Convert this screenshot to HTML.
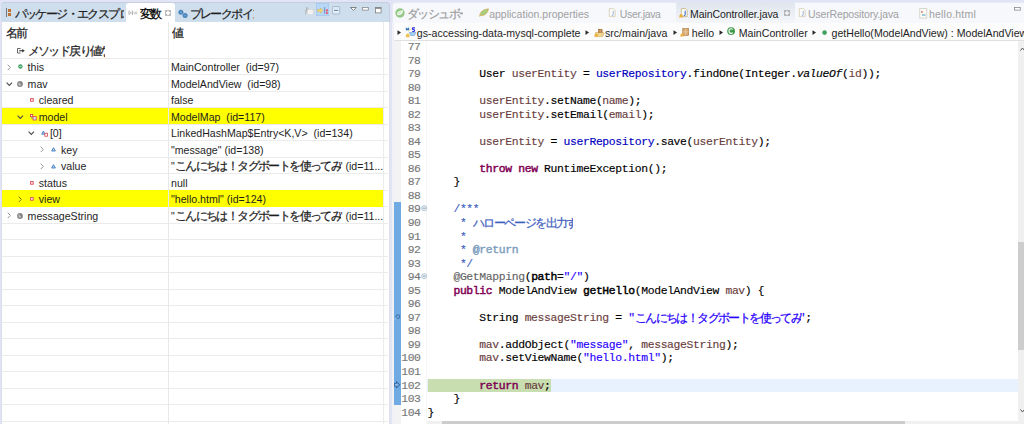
<!DOCTYPE html><html><head><meta charset="utf-8"><style>
html,body{margin:0;padding:0}
body{width:1024px;height:424px;overflow:hidden;background:#e0e4f4;position:relative;font-family:"Liberation Sans",sans-serif}
.a{position:absolute}
.t{white-space:nowrap}
.code{font-family:"Liberation Mono",monospace;font-size:11.4px;letter-spacing:-0.36px;line-height:13.54px;white-space:pre;color:#000;-webkit-text-stroke:0.15px}
.kw{color:#7f0055;-webkit-text-stroke:0.45px #7f0055}
.lv{color:#6a3e3e}
.fd{color:#0000c0}
.st{color:#2a00ff}
.jd{color:#3f5fbf}
.jt{color:#7f9fbf;-webkit-text-stroke:0.45px #7f9fbf}
.an{color:#646464}
.b{-webkit-text-stroke:0.45px #000}
.i{font-style:italic}
.jp{position:relative;top:0px;font-size:12px;letter-spacing:-1.6px;-webkit-text-stroke:0.25px;font-family:"Liberation Sans",sans-serif;display:inline-block;white-space:nowrap;overflow:hidden;padding-right:2px;margin-right:-2px;vertical-align:top;text-align:justify;text-align-last:justify}
</style></head><body>
<div class="a" style="left:0.70px;top:2.10px;width:389.30px;height:20.30px;background:#c8cedf;border-radius:3.5px 3.5px 0 0"></div>
<div class="a" style="left:1.40px;top:2.80px;width:387.80px;height:19.60px;background:#cfdeed;border-radius:3px 3px 0 0"></div>
<div class="a" style="left:126.00px;top:3.00px;width:49.20px;height:19.40px;background:#ffffff;border-radius:3px 3px 0 0"></div>
<div class="a" style="left:1.20px;top:22.40px;width:387.60px;height:401.60px;background:#ffffff;"></div>
<div class="a" style="left:388.80px;top:22.40px;width:1.20px;height:401.60px;background:#dfe0e8;"></div>
<div class="a" style="left:0.70px;top:22.40px;width:0.70px;height:401.60px;background:#dcdde8;"></div>
<svg class="a" style="left:6.00px;top:8.00px;" width="6" height="10" viewBox="0 0 6 10"><rect x="0" y="0" width="1" height="9" fill="#777"/><rect x="2" y="1" width="3" height="3" fill="#c07030"/><rect x="2" y="5" width="3" height="3" fill="#c07030"/></svg>
<div class="a t" style="left:14.50px;top:6.79px;font-size:11px;line-height:14px;color:#1e1e1e;"><span class="jp" style="width:107px">パッケージ・エクスプローラー</span></div>
<svg class="a" style="left:127.50px;top:9.50px;" width="10" height="6" viewBox="0 0 10 6"><path d="M1.3 0.5Q0.3 2.75 1.3 5 M4.3 0.5Q5.3 2.75 4.3 5" stroke="#888" stroke-width="0.7" fill="none"/><path d="M2 1.8L3.6 3.8M3.6 1.8L2 3.8" stroke="#999" stroke-width="0.6"/><path d="M6.2 2.2h3 M6.2 3.6h3" stroke="#999" stroke-width="0.6"/></svg>
<div class="a t" style="left:139.50px;top:6.79px;font-size:11px;line-height:14px;color:#000;"><span class="jp" style="width:21px">変数</span></div>
<svg class="a" style="left:165.00px;top:10.00px;" width="6" height="6" viewBox="0 0 6 6"><path d="M0.6 0.6h4.8v4.8h-4.8z M0.6 0.6l4.8 4.8 M5.4 0.6l-4.8 4.8" stroke="#8a8a8a" stroke-width="0.6" fill="none"/><rect x="2" y="2" width="2" height="2" fill="#fff"/></svg>
<svg class="a" style="left:177.50px;top:8.50px;" width="10" height="9" viewBox="0 0 10 9"><circle cx="2.9" cy="3.3" r="2.3" fill="#4a88c0" stroke="#3a70a8" stroke-width="0.4"/><circle cx="7.1" cy="6.6" r="2.3" fill="#4a88c0" stroke="#3a70a8" stroke-width="0.4"/><circle cx="2.9" cy="3.3" r="0.7" fill="#8cbce6"/><circle cx="7.1" cy="6.6" r="0.7" fill="#8cbce6"/></svg>
<div class="a t" style="left:189.50px;top:6.79px;font-size:11px;line-height:14px;color:#1e1e1e;"><span class="jp" style="width:62px">ブレークポイント</span></div>
<svg class="a" style="left:303.80px;top:5.60px;" width="10" height="9" viewBox="0 0 10 9"><path d="M1.5 8.5L2.8 1.2 M2.8 1.2L4.5 3.5 M1 5L3.5 4" stroke="#a8a8a8" stroke-width="0.8" fill="none"/><rect x="3.6" y="3.6" width="5.6" height="5" fill="#f2f2f2" stroke="#d4d4d4" stroke-width="0.6"/></svg>
<div class="a" style="left:315.90px;top:3.20px;width:13.60px;height:12.60px;background:#b8d7f6;box-shadow:inset 0 0 0 0.8px #a4caf0"></div>
<svg class="a" style="left:317.30px;top:6.50px;" width="12" height="8" viewBox="0 0 12 8"><path d="M0.5 2.6H3.6V1.2L6 3.5L3.6 5.8V4.4H0.5z" fill="#f4e088" stroke="#d8b040" stroke-width="0.6"/><path d="M7.6 0.6V6.4" stroke="#4a6ab0" stroke-width="1.1" stroke-dasharray="1 0.6"/><circle cx="9.9" cy="3.4" r="1.1" fill="#e85068"/><circle cx="9.9" cy="6" r="1.1" fill="#e85068"/></svg>
<svg class="a" style="left:332.20px;top:6.20px;" width="9" height="9" viewBox="0 0 9 9"><rect x="0.5" y="0.5" width="7.2" height="7.6" rx="0.8" fill="#dbe8f6" stroke="#9aaabb" stroke-width="0.7"/><rect x="1.5" y="3" width="5.4" height="2.6" fill="#fff"/><path d="M2 4.3h4.4" stroke="#3f6aa8" stroke-width="1"/></svg>
<svg class="a" style="left:349.80px;top:6.60px;" width="7" height="4" viewBox="0 0 7 4"><path d="M0.5 0.5H6.3L3.4 3.4z" fill="#fff" stroke="#666" stroke-width="0.8"/></svg>
<svg class="a" style="left:361.60px;top:6.80px;" width="7" height="4" viewBox="0 0 7 4"><rect x="0.5" y="0.5" width="5.8" height="2.6" fill="#fff" stroke="#8a8a8a" stroke-width="0.8"/></svg>
<svg class="a" style="left:374.80px;top:6.80px;" width="7" height="7" viewBox="0 0 7 7"><rect x="0.5" y="0.5" width="5.6" height="5.4" fill="#fff" stroke="#808080" stroke-width="0.8"/><rect x="0.5" y="0.5" width="5.6" height="1.3" fill="#808080"/></svg>
<div class="a t" style="left:6.00px;top:26.39px;font-size:11px;line-height:14px;color:#1e1e1e;"><span class="jp" style="width:20.5px">名前</span></div>
<div class="a t" style="left:172.00px;top:26.39px;font-size:11px;line-height:14px;color:#1e1e1e;"><span class="jp" style="width:10px">値</span></div>
<div class="a" style="left:2.40px;top:57.50px;width:385.40px;height:1.00px;background:#ebebeb;"></div>
<div class="a" style="left:2.40px;top:74.02px;width:385.40px;height:1.00px;background:#ebebeb;"></div>
<div class="a" style="left:2.40px;top:90.54px;width:385.40px;height:1.00px;background:#ebebeb;"></div>
<div class="a" style="left:2.40px;top:107.06px;width:385.40px;height:1.00px;background:#ebebeb;"></div>
<div class="a" style="left:2.40px;top:123.58px;width:385.40px;height:1.00px;background:#ebebeb;"></div>
<div class="a" style="left:2.40px;top:140.10px;width:385.40px;height:1.00px;background:#ebebeb;"></div>
<div class="a" style="left:2.40px;top:156.62px;width:385.40px;height:1.00px;background:#ebebeb;"></div>
<div class="a" style="left:2.40px;top:173.14px;width:385.40px;height:1.00px;background:#ebebeb;"></div>
<div class="a" style="left:2.40px;top:189.66px;width:385.40px;height:1.00px;background:#ebebeb;"></div>
<div class="a" style="left:2.40px;top:206.18px;width:385.40px;height:1.00px;background:#ebebeb;"></div>
<div class="a" style="left:2.40px;top:222.70px;width:385.40px;height:1.00px;background:#ebebeb;"></div>
<div class="a" style="left:2.40px;top:239.22px;width:385.40px;height:1.00px;background:#ebebeb;"></div>
<div class="a" style="left:2.40px;top:255.74px;width:385.40px;height:1.00px;background:#ebebeb;"></div>
<div class="a" style="left:2.40px;top:272.26px;width:385.40px;height:1.00px;background:#ebebeb;"></div>
<div class="a" style="left:2.40px;top:288.78px;width:385.40px;height:1.00px;background:#ebebeb;"></div>
<div class="a" style="left:2.40px;top:305.30px;width:385.40px;height:1.00px;background:#ebebeb;"></div>
<div class="a" style="left:2.40px;top:321.82px;width:385.40px;height:1.00px;background:#ebebeb;"></div>
<div class="a" style="left:2.40px;top:338.34px;width:385.40px;height:1.00px;background:#ebebeb;"></div>
<div class="a" style="left:2.40px;top:354.86px;width:385.40px;height:1.00px;background:#ebebeb;"></div>
<div class="a" style="left:2.40px;top:371.38px;width:385.40px;height:1.00px;background:#ebebeb;"></div>
<div class="a" style="left:2.40px;top:387.90px;width:385.40px;height:1.00px;background:#ebebeb;"></div>
<div class="a" style="left:2.40px;top:404.42px;width:385.40px;height:1.00px;background:#ebebeb;"></div>
<div class="a" style="left:2.40px;top:420.94px;width:385.40px;height:1.00px;background:#ebebeb;"></div>
<div class="a" style="left:2.40px;top:107.68px;width:380.60px;height:16.50px;background:#ffff00;"></div>
<div class="a" style="left:2.40px;top:190.28px;width:380.60px;height:16.50px;background:#ffff00;"></div>
<div class="a" style="left:167.80px;top:22.40px;width:1.00px;height:401.60px;background:#e8e8e8;"></div>
<div class="a" style="left:383.00px;top:22.40px;width:0.80px;height:401.60px;background:#ececec;"></div>
<svg class="a" style="left:16.50px;top:47.70px;" width="8" height="6" viewBox="0 0 8 6"><path d="M3.6 0.5H0.5V5H3.6" stroke="#555" stroke-width="0.9" fill="none"/><path d="M2.2 2.75h3.6" stroke="#333" stroke-width="1.1"/><path d="M5.2 0.9L7.8 2.75L5.2 4.6z" fill="#333"/></svg>
<div class="a t" style="left:27.60px;top:43.71px;font-size:10.6px;line-height:14px;color:#1e1e1e;"><span class="jp" style="width:75.5px">メソッド戻り値なし</span></div>
<svg class="a" style="left:6.70px;top:63.62px;" width="5" height="7" viewBox="0 0 5 7"><path d="M0.7 0.7L3.4 3.4L0.7 6.1" stroke="#959595" stroke-width="1" fill="none"/></svg>
<svg class="a" style="left:17.60px;top:64.42px;" width="5" height="5" viewBox="0 0 5 5"><circle cx="2.4" cy="2.45" r="2.2" fill="#41a064"/><path d="M1.2 2.45h2.4" stroke="#b8e6c8" stroke-width="0.9"/></svg>
<div class="a t" style="left:27.60px;top:60.23px;font-size:10.6px;line-height:14px;color:#1e1e1e;">this</div>
<div class="a t" style="left:171.00px;top:60.23px;font-size:10.6px;line-height:14px;color:#1e1e1e;">MainController&nbsp; (id=97)</div>
<svg class="a" style="left:5.60px;top:81.54px;" width="7" height="5" viewBox="0 0 7 5"><path d="M0.6 0.7L3.3 3.4L6.0 0.7" stroke="#4a4a4a" stroke-width="1.1" fill="none"/></svg>
<svg class="a" style="left:17.20px;top:80.54px;" width="6" height="6" viewBox="0 0 6 6"><circle cx="3" cy="3" r="2.9" fill="#858585"/><path d="M2.2 1.6V3.9H4" stroke="#f0f0f0" stroke-width="0.8" fill="none"/></svg>
<div class="a t" style="left:27.60px;top:76.75px;font-size:10.6px;line-height:14px;color:#1e1e1e;">mav</div>
<div class="a t" style="left:171.00px;top:76.75px;font-size:10.6px;line-height:14px;color:#1e1e1e;">ModelAndView&nbsp; (id=98)</div>
<svg class="a" style="left:30.00px;top:98.16px;" width="4" height="4" viewBox="0 0 4 4"><rect x="0.6" y="0.6" width="2.6" height="2.6" fill="#fff6f6" stroke="#d84050" stroke-width="0.9"/></svg>
<div class="a t" style="left:38.75px;top:93.27px;font-size:10.6px;line-height:14px;color:#1e1e1e;">cleared</div>
<div class="a t" style="left:171.00px;top:93.27px;font-size:10.6px;line-height:14px;color:#1e1e1e;">false</div>
<svg class="a" style="left:16.80px;top:114.58px;" width="7" height="5" viewBox="0 0 7 5"><path d="M0.6 0.7L3.3 3.4L6.0 0.7" stroke="#4a4a4a" stroke-width="1.1" fill="none"/></svg>
<svg class="a" style="left:30.20px;top:113.58px;" width="7" height="7" viewBox="0 0 7 7"><rect x="0.5" y="0.5" width="2.2" height="2.2" fill="#fff" stroke="#d84050" stroke-width="0.8"/><path d="M1.6 2.7V4.2H3" stroke="#6a8ab8" stroke-width="0.6" fill="none"/><rect x="3" y="2.6" width="3.2" height="3.4" fill="#d8e4f4" stroke="#d84050" stroke-width="0.8"/></svg>
<div class="a t" style="left:38.75px;top:109.79px;font-size:10.6px;line-height:14px;color:#1e1e1e;">model</div>
<div class="a t" style="left:171.00px;top:109.79px;font-size:10.6px;line-height:14px;color:#1e1e1e;">ModelMap&nbsp; (id=117)</div>
<svg class="a" style="left:28.00px;top:131.10px;" width="7" height="5" viewBox="0 0 7 5"><path d="M0.6 0.7L3.3 3.4L6.0 0.7" stroke="#4a4a4a" stroke-width="1.1" fill="none"/></svg>
<svg class="a" style="left:40.60px;top:129.90px;" width="7" height="7" viewBox="0 0 7 7"><path d="M0.6 4.2 L2.4 1 L4.2 4.2z" fill="#a8c8ec" stroke="#3f78c0" stroke-width="0.8"/><rect x="3.8" y="3.2" width="2.6" height="3" fill="#fff" stroke="#d84050" stroke-width="0.8"/></svg>
<div class="a t" style="left:49.90px;top:126.31px;font-size:10.6px;line-height:14px;color:#1e1e1e;">[0]</div>
<div class="a t" style="left:171.00px;top:126.31px;font-size:10.6px;line-height:14px;color:#1e1e1e;">LinkedHashMap$Entry&lt;K,V&gt;&nbsp; (id=134)</div>
<svg class="a" style="left:40.15px;top:146.22px;" width="5" height="7" viewBox="0 0 5 7"><path d="M0.7 0.7L3.4 3.4L0.7 6.1" stroke="#959595" stroke-width="1" fill="none"/></svg>
<svg class="a" style="left:51.30px;top:147.42px;" width="6" height="5" viewBox="0 0 6 5"><path d="M0.6 4 L2.5 0.7 L4.4 4z" fill="#b8d4f0" stroke="#3f78c0" stroke-width="0.9"/></svg>
<div class="a t" style="left:61.05px;top:142.83px;font-size:10.6px;line-height:14px;color:#1e1e1e;">key</div>
<div class="a t" style="left:171.00px;top:142.83px;font-size:10.6px;line-height:14px;color:#1e1e1e;">"message" (id=138)</div>
<svg class="a" style="left:40.15px;top:162.74px;" width="5" height="7" viewBox="0 0 5 7"><path d="M0.7 0.7L3.4 3.4L0.7 6.1" stroke="#959595" stroke-width="1" fill="none"/></svg>
<svg class="a" style="left:51.30px;top:163.94px;" width="6" height="5" viewBox="0 0 6 5"><path d="M0.6 4 L2.5 0.7 L4.4 4z" fill="#b8d4f0" stroke="#3f78c0" stroke-width="0.9"/></svg>
<div class="a t" style="left:61.05px;top:159.35px;font-size:10.6px;line-height:14px;color:#1e1e1e;">value</div>
<div class="a t" style="left:171.00px;top:159.35px;font-size:10.6px;line-height:14px;color:#1e1e1e;">"<span class="jp" style="width:164px">こんにちは！タグボートを使ってみてね！</span>" (id=11...</div>
<svg class="a" style="left:30.00px;top:180.76px;" width="4" height="4" viewBox="0 0 4 4"><rect x="0.6" y="0.6" width="2.6" height="2.6" fill="#fff6f6" stroke="#d84050" stroke-width="0.9"/></svg>
<div class="a t" style="left:38.75px;top:175.87px;font-size:10.6px;line-height:14px;color:#1e1e1e;">status</div>
<div class="a t" style="left:171.00px;top:175.87px;font-size:10.6px;line-height:14px;color:#1e1e1e;">null</div>
<svg class="a" style="left:17.85px;top:195.78px;" width="5" height="7" viewBox="0 0 5 7"><path d="M0.7 0.7L3.4 3.4L0.7 6.1" stroke="#7a7a10" stroke-width="1" fill="none"/></svg>
<svg class="a" style="left:30.00px;top:197.28px;" width="4" height="4" viewBox="0 0 4 4"><rect x="0.6" y="0.6" width="2.6" height="2.6" fill="#fff6f6" stroke="#d84050" stroke-width="0.9"/></svg>
<div class="a t" style="left:38.75px;top:192.39px;font-size:10.6px;line-height:14px;color:#1e1e1e;">view</div>
<div class="a t" style="left:171.00px;top:192.39px;font-size:10.6px;line-height:14px;color:#1e1e1e;">"hello.html" (id=124)</div>
<svg class="a" style="left:6.70px;top:212.30px;" width="5" height="7" viewBox="0 0 5 7"><path d="M0.7 0.7L3.4 3.4L0.7 6.1" stroke="#959595" stroke-width="1" fill="none"/></svg>
<svg class="a" style="left:17.20px;top:212.70px;" width="6" height="6" viewBox="0 0 6 6"><circle cx="3" cy="3" r="2.9" fill="#858585"/><path d="M2.2 1.6V3.9H4" stroke="#f0f0f0" stroke-width="0.8" fill="none"/></svg>
<div class="a t" style="left:27.60px;top:208.91px;font-size:10.6px;line-height:14px;color:#1e1e1e;">messageString</div>
<div class="a t" style="left:171.00px;top:208.91px;font-size:10.6px;line-height:14px;color:#1e1e1e;">"<span class="jp" style="width:164px">こんにちは！タグボートを使ってみてね！</span>" (id=11...</div>
<div class="a" style="left:392.00px;top:2.00px;width:632.00px;height:422.00px;background:#e8eaf4;border-radius:3.5px 0 0 0"></div>
<div class="a" style="left:392.70px;top:2.70px;width:631.30px;height:421.30px;background:#f7f8fc;border-radius:3px 0 0 0"></div>
<div class="a" style="left:676.00px;top:2.30px;width:119.00px;height:20.30px;background:linear-gradient(#dfe5ee,#eef1f6 70%,#f4f6f9);border-radius:3px 3px 0 0"></div>
<div class="a" style="left:393.00px;top:22.50px;width:631.00px;height:17.80px;background:#fcfcfc;"></div>
<div class="a" style="left:393.00px;top:40.40px;width:631.00px;height:1.00px;background:#e0e0e0;"></div>
<div class="a" style="left:393.00px;top:41.40px;width:631.00px;height:382.60px;background:#ffffff;"></div>
<div class="a" style="left:392.00px;top:22.50px;width:1.50px;height:401.50px;background:#f2f2f6;"></div>
<div class="a" style="left:393.50px;top:41.20px;width:7.50px;height:382.80px;background:#f3f3f3;"></div>
<div class="a" style="left:426.00px;top:41.40px;width:1.00px;height:382.60px;background:#f7f7f7;"></div>
<svg class="a" style="left:395.00px;top:7.80px;" width="11" height="11" viewBox="0 0 11 11"><circle cx="5" cy="5" r="4.7" fill="#96c888"/><path d="M1.8 6.6Q2.2 2.6 8.2 2.2Q8.2 6.8 3.4 7.2Q2.6 7.2 1.8 6.6z" fill="#f4faf2"/><path d="M2.6 6.4Q4.5 4.8 6.6 3.8" stroke="#96c888" stroke-width="0.6" fill="none"/></svg>
<div class="a t" style="left:407.00px;top:6.69px;font-size:11px;line-height:14px;color:#a0a0a0;"><span class="jp" style="width:54px">ダッシュボード</span></div>
<svg class="a" style="left:478.50px;top:8.00px;" width="10" height="9" viewBox="0 0 10 9"><path d="M0.5 8.5 Q1 1.5 9.5 0.8 Q8.5 7.5 1.5 7.8" fill="#a8cf80" stroke="#d8a040" stroke-width="0.6"/></svg>
<div class="a t" style="left:489.20px;top:6.86px;font-size:10.5px;line-height:14px;color:#a0a0a0;">application.properties</div>
<svg class="a" style="left:607.40px;top:8.30px;" width="10" height="11" viewBox="0 0 10 11"><path d="M2.3 0.6H6.6L8.2 2.2V8.6H2.3z" fill="#fcfcfa" stroke="#d4ccb0" stroke-width="0.8"/><path d="M6.2 2.8V6.2Q6.2 7.6 4.8 7.6" stroke="#a8bce0" stroke-width="1.1" fill="none"/></svg>
<div class="a t" style="left:619.80px;top:6.86px;font-size:10.5px;line-height:14px;color:#a0a0a0;letter-spacing:-0.33px">User.java</div>
<svg class="a" style="left:678.50px;top:8.30px;" width="10" height="11" viewBox="0 0 10 11"><path d="M2.3 0.6H6.6L8.2 2.2V8.6H2.3z" fill="#fcfcfa" stroke="#c0b078" stroke-width="0.8"/><path d="M6.2 2.8V6.2Q6.2 7.6 4.8 7.6" stroke="#3f6ec0" stroke-width="1.1" fill="none"/><path d="M0.2 9.6Q0.2 5.9 2.1 5.9Q4 5.9 4 9.6z" fill="#eab040"/></svg>
<div class="a t" style="left:690.00px;top:6.86px;font-size:10.5px;line-height:14px;color:#1e1e1e;letter-spacing:-0.08px">MainController.java</div>
<svg class="a" style="left:784.00px;top:10.00px;" width="6" height="6" viewBox="0 0 6 6"><path d="M0.6 0.6h4.8v4.8h-4.8z M0.6 0.6l4.8 4.8 M5.4 0.6l-4.8 4.8" stroke="#8a8a8a" stroke-width="0.6" fill="none"/><rect x="2" y="2" width="2" height="2" fill="#eef1f6"/></svg>
<svg class="a" style="left:796.50px;top:8.30px;" width="10" height="11" viewBox="0 0 10 11"><path d="M2.3 0.6H6.6L8.2 2.2V8.6H2.3z" fill="#fcfcfa" stroke="#d4ccb0" stroke-width="0.8"/><path d="M6.2 2.8V6.2Q6.2 7.6 4.8 7.6" stroke="#a8bce0" stroke-width="1.1" fill="none"/></svg>
<div class="a t" style="left:808.00px;top:6.86px;font-size:10.5px;line-height:14px;color:#a0a0a0;letter-spacing:-0.16px">UserRepository.java</div>
<svg class="a" style="left:918.80px;top:7.50px;" width="9" height="11" viewBox="0 0 9 11"><rect x="0.8" y="0.6" width="7" height="9.5" fill="#fbfbf8" stroke="#cfcfc0" stroke-width="0.8"/><rect x="2" y="3" width="2" height="2" fill="#e0a0a0"/><rect x="3" y="6" width="3.5" height="2" fill="#a0c8d8"/></svg>
<div class="a t" style="left:929.00px;top:6.86px;font-size:10.5px;line-height:14px;color:#a0a0a0;letter-spacing:0.2px">hello.html</div>
<svg class="a" style="left:1013.50px;top:6.80px;" width="7" height="4" viewBox="0 0 7 4"><rect x="0.5" y="0.5" width="5.8" height="2.6" fill="#fff" stroke="#8a8a8a" stroke-width="0.8"/></svg>
<svg class="a" style="left:397.20px;top:29.60px;" width="5" height="6" viewBox="0 0 5 6"><path d="M0.5 0.2L4 2.6L0.5 5z" fill="#2a2a2a"/></svg>
<svg class="a" style="left:404.50px;top:26.50px;" width="12" height="11" viewBox="0 0 12 11"><path d="M1.3 3.3V0.8L2.5 2.2L3.7 0.8V3.3" fill="#2f70b8" stroke="#2f70b8" stroke-width="0.9"/><path d="M10 0.9H8Q7.3 0.9 7.3 1.8Q7.3 2.6 8.5 2.6Q9.7 2.6 9.7 3.6Q9.7 4.5 8.8 4.5H7.2" stroke="#3030e0" stroke-width="1.1" fill="none"/><path d="M3.3 4.3L6.8 1.5" stroke="#f0dc9c" stroke-width="0.9"/><path d="M4.3 5.5H10.8L9.5 8.4H5.6z" fill="#a8d0f4" stroke="#6a98d0" stroke-width="0.6"/><path d="M0.8 10.2Q0.8 6.6 2.7 6.6Q4.6 6.6 4.6 10.2z" fill="#f0c050"/></svg>
<div class="a t" style="left:416.80px;top:25.63px;font-size:10.6px;line-height:14px;color:#1e1e1e;">gs-accessing-data-mysql-complete</div>
<svg class="a" style="left:585.40px;top:29.60px;" width="5" height="6" viewBox="0 0 5 6"><path d="M0.5 0.2L4 2.6L0.5 5z" fill="#2a2a2a"/></svg>
<svg class="a" style="left:593.50px;top:27.80px;" width="11" height="10" viewBox="0 0 11 10"><path d="M1.5 4.5H9.5L10.2 5.2L8.6 8.6H1.5z" fill="#f0d58c" stroke="#c8a050" stroke-width="0.5"/><rect x="4" y="1" width="4.5" height="3.8" fill="#b07840"/><path d="M4 2.9h4.5 M6.2 1v3.8" stroke="#e0c090" stroke-width="0.5"/><path d="M0.4 8.8Q0.4 5.4 2.2 5.4Q4 5.4 4 8.8z" fill="#eab040"/></svg>
<div class="a t" style="left:605.00px;top:25.63px;font-size:10.6px;line-height:14px;color:#1e1e1e;">src/main/java</div>
<svg class="a" style="left:672.60px;top:29.60px;" width="5" height="6" viewBox="0 0 5 6"><path d="M0.5 0.2L4 2.6L0.5 5z" fill="#2a2a2a"/></svg>
<svg class="a" style="left:680.40px;top:28.20px;" width="10" height="9" viewBox="0 0 10 9"><rect x="2.8" y="0.5" width="5.8" height="6.8" fill="#d8a870" stroke="#a06a3a" stroke-width="0.6"/><path d="M2.8 3.9h5.8 M5.7 0.5v6.8" stroke="#f4dcb8" stroke-width="0.6"/><path d="M0.3 8.6Q0.3 5.5 2 5.5Q3.7 5.5 3.7 8.6z" fill="#eab040"/></svg>
<div class="a t" style="left:691.80px;top:25.63px;font-size:10.6px;line-height:14px;color:#1e1e1e;">hello</div>
<svg class="a" style="left:718.60px;top:29.60px;" width="5" height="6" viewBox="0 0 5 6"><path d="M0.5 0.2L4 2.6L0.5 5z" fill="#2a2a2a"/></svg>
<svg class="a" style="left:727.40px;top:26.90px;" width="9" height="9" viewBox="0 0 9 9"><circle cx="4.1" cy="4.1" r="3.9" fill="#3f9a48"/><path d="M5.8 2.5Q5.2 1.8 4.1 1.8Q2 1.8 2 4.1Q2 6.4 4.1 6.4Q5.2 6.4 5.8 5.7" stroke="#fff" stroke-width="1.1" fill="none"/></svg>
<div class="a t" style="left:738.80px;top:25.63px;font-size:10.6px;line-height:14px;color:#1e1e1e;">MainController</div>
<svg class="a" style="left:812.00px;top:29.60px;" width="5" height="6" viewBox="0 0 5 6"><path d="M0.5 0.2L4 2.6L0.5 5z" fill="#2a2a2a"/></svg>
<svg class="a" style="left:821.80px;top:30.00px;" width="6" height="6" viewBox="0 0 6 6"><circle cx="2.6" cy="2.6" r="2.3" fill="#40a060"/></svg>
<div class="a t" style="left:831.50px;top:25.63px;font-size:10.6px;line-height:14px;color:#1e1e1e;">getHello(ModelAndView) : ModelAndView</div>
<div class="a" style="left:427.00px;top:378.50px;width:591.00px;height:13.40px;background:#e8f2fe;"></div>
<div class="a" style="left:428.00px;top:378.50px;width:122.90px;height:13.40px;background:#c8deb0;"></div>
<div class="a" style="left:394.00px;top:202.20px;width:7.00px;height:203.30px;background:#6fabe2;"></div>
<div class="a code" style="left:396px;width:24.6px;text-align:right;top:41.00px;color:#787878">77</div>
<div class="a code" style="left:396px;width:24.6px;text-align:right;top:54.54px;color:#787878">78</div>
<div class="a code" style="left:396px;width:24.6px;text-align:right;top:68.08px;color:#787878">79</div>
<div class="a code" style="left:396px;width:24.6px;text-align:right;top:81.62px;color:#787878">80</div>
<div class="a code" style="left:396px;width:24.6px;text-align:right;top:95.16px;color:#787878">81</div>
<div class="a code" style="left:396px;width:24.6px;text-align:right;top:108.70px;color:#787878">82</div>
<div class="a code" style="left:396px;width:24.6px;text-align:right;top:122.24px;color:#787878">83</div>
<div class="a code" style="left:396px;width:24.6px;text-align:right;top:135.78px;color:#787878">84</div>
<div class="a code" style="left:396px;width:24.6px;text-align:right;top:149.32px;color:#787878">85</div>
<div class="a code" style="left:396px;width:24.6px;text-align:right;top:162.86px;color:#787878">86</div>
<div class="a code" style="left:396px;width:24.6px;text-align:right;top:176.40px;color:#787878">87</div>
<div class="a code" style="left:396px;width:24.6px;text-align:right;top:189.94px;color:#787878">88</div>
<div class="a code" style="left:396px;width:24.6px;text-align:right;top:203.48px;color:#787878">89</div>
<div class="a code" style="left:396px;width:24.6px;text-align:right;top:217.02px;color:#787878">90</div>
<div class="a code" style="left:396px;width:24.6px;text-align:right;top:230.56px;color:#787878">91</div>
<div class="a code" style="left:396px;width:24.6px;text-align:right;top:244.10px;color:#787878">92</div>
<div class="a code" style="left:396px;width:24.6px;text-align:right;top:257.64px;color:#787878">93</div>
<div class="a code" style="left:396px;width:24.6px;text-align:right;top:271.18px;color:#787878">94</div>
<div class="a code" style="left:396px;width:24.6px;text-align:right;top:284.72px;color:#787878">95</div>
<div class="a code" style="left:396px;width:24.6px;text-align:right;top:298.26px;color:#787878">96</div>
<div class="a code" style="left:396px;width:24.6px;text-align:right;top:311.80px;color:#787878">97</div>
<div class="a code" style="left:396px;width:24.6px;text-align:right;top:325.34px;color:#787878">98</div>
<div class="a code" style="left:396px;width:24.6px;text-align:right;top:338.88px;color:#787878">99</div>
<div class="a code" style="left:396px;width:24.6px;text-align:right;top:352.42px;color:#787878">100</div>
<div class="a code" style="left:396px;width:24.6px;text-align:right;top:365.96px;color:#787878">101</div>
<div class="a code" style="left:396px;width:24.6px;text-align:right;top:379.50px;color:#787878">102</div>
<div class="a code" style="left:396px;width:24.6px;text-align:right;top:393.04px;color:#787878">103</div>
<div class="a code" style="left:396px;width:24.6px;text-align:right;top:406.58px;color:#787878">104</div>
<svg class="a" style="left:420.80px;top:205.38px;" width="7" height="7" viewBox="0 0 7 7"><circle cx="3.2" cy="3.2" r="2.6" fill="#e8eef5" stroke="#a8b8c8" stroke-width="0.7"/><path d="M1.8 3.2h2.8" stroke="#7890a8" stroke-width="0.8"/></svg>
<svg class="a" style="left:420.80px;top:273.08px;" width="7" height="7" viewBox="0 0 7 7"><circle cx="3.2" cy="3.2" r="2.6" fill="#e8eef5" stroke="#a8b8c8" stroke-width="0.7"/><path d="M1.8 3.2h2.8" stroke="#7890a8" stroke-width="0.8"/></svg>
<svg class="a" style="left:394.00px;top:312.50px;" width="7" height="7" viewBox="0 0 7 7"><circle cx="3.9" cy="3.6" r="1.8" fill="#78b0e6" stroke="#2a5a90" stroke-width="0.8"/><path d="M2.5 5L0.6 6.4" stroke="#a8c8ec" stroke-width="1"/></svg>
<svg class="a" style="left:394.00px;top:381.00px;" width="7" height="8" viewBox="0 0 7 8"><path d="M0.5 2.3H2.6V0.6L5.8 3.8L2.6 7V5.3H0.5z" fill="#6aa0d8" stroke="#1f4f88" stroke-width="0.7"/><path d="M0.9 3.8H3.5" stroke="#c8e0f8" stroke-width="0.7"/></svg>
<div class="a code" style="left:427.5px;top:68.08px">        User <span class="lv">userEntity</span> = <span class="fd">userRepository</span>.findOne(Integer.<span class="i">valueOf</span>(<span class="lv">id</span>));</div>
<div class="a code" style="left:427.5px;top:95.16px">        <span class="lv">userEntity</span>.setName(<span class="lv">name</span>);</div>
<div class="a code" style="left:427.5px;top:108.70px">        <span class="lv">userEntity</span>.setEmail(<span class="lv">email</span>);</div>
<div class="a code" style="left:427.5px;top:135.78px">        <span class="lv">userEntity</span> = <span class="fd">userRepository</span>.save(<span class="lv">userEntity</span>);</div>
<div class="a code" style="left:427.5px;top:162.86px">        <span class="kw">throw</span> <span class="kw">new</span> RuntimeException();</div>
<div class="a code" style="left:427.5px;top:176.40px">    }</div>
<div class="a code" style="left:427.5px;top:203.48px">    <span class="jd">/***</span></div>
<div class="a code" style="left:427.5px;top:217.02px"><span class="jd">     * <span class="jp" style="width:98px">ハローページを出力する</span></span></div>
<div class="a code" style="left:427.5px;top:230.56px"><span class="jd">     *</span></div>
<div class="a code" style="left:427.5px;top:244.10px"><span class="jd">     * </span><span class="jt">@return</span></div>
<div class="a code" style="left:427.5px;top:257.64px"><span class="jd">     */</span></div>
<div class="a code" style="left:427.5px;top:271.18px">    <span class="an">@GetMapping</span>(<span class="b">path</span>=<span class="st">"/"</span>)</div>
<div class="a code" style="left:427.5px;top:284.72px">    <span class="kw">public</span> ModelAndView <span class="b">getHello</span>(ModelAndView <span class="lv">mav</span>) {</div>
<div class="a code" style="left:427.5px;top:311.80px">        String <span class="lv">messageString</span> = <span class="st">"<span class="jp" style="width:164px">こんにちは！タグボートを使ってみてね！</span>"</span>;</div>
<div class="a code" style="left:427.5px;top:338.88px">        <span class="lv">mav</span>.addObject(<span class="st">"message"</span>, <span class="lv">messageString</span>);</div>
<div class="a code" style="left:427.5px;top:352.42px">        <span class="lv">mav</span>.setViewName(<span class="st">"hello.html"</span>);</div>
<div class="a code" style="left:427.5px;top:379.50px">        <span class="kw">return</span> <span class="lv">mav</span>;</div>
<div class="a code" style="left:427.5px;top:393.04px">    }</div>
<div class="a code" style="left:427.5px;top:406.58px">}</div>
<div class="a" style="left:1018.00px;top:41.20px;width:6.00px;height:382.80px;background:#f0f0f0;"></div>
<div class="a" style="left:1018.00px;top:242.00px;width:6.00px;height:108.00px;background:#cdcdcd;"></div>
<svg class="a" style="left:1019.50px;top:47.00px;" width="5" height="4" viewBox="0 0 5 4"><path d="M0.5 3.5L2.5 1L4.5 3.5" stroke="#555" stroke-width="1" fill="none"/></svg>
<svg class="a" style="left:1019.50px;top:409.00px;" width="5" height="4" viewBox="0 0 5 4"><path d="M0.5 0.5L2.5 3L4.5 0.5" stroke="#555" stroke-width="1" fill="none"/></svg>
<div class="a" style="left:427.00px;top:421.00px;width:591.00px;height:3.00px;background:#f0f0f0;"></div>
<div class="a" style="left:442.00px;top:421.00px;width:463.00px;height:3.00px;background:#cdcdcd;"></div>
</body></html>
